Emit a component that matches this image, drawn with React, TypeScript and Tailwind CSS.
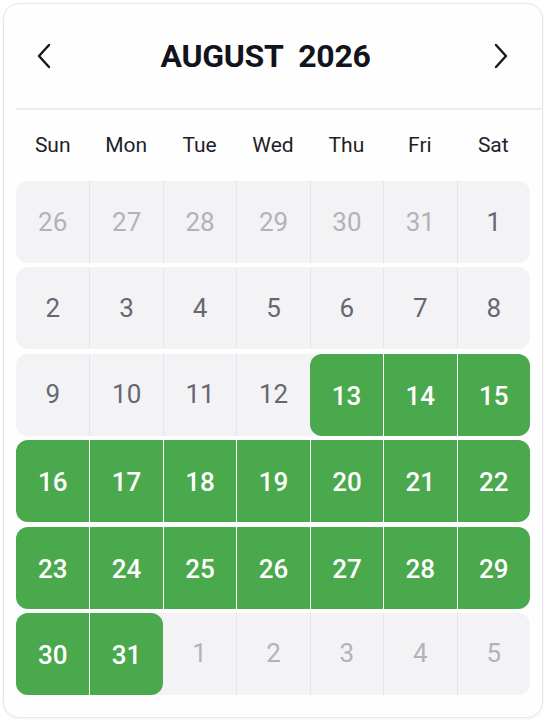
import { ReactNode } from 'react';

type Day = { n: number; muted?: boolean; on?: boolean };

const WEEKDAYS = ['Sun', 'Mon', 'Tue', 'Wed', 'Thu', 'Fri', 'Sat'];

// August 2026 starts on a Saturday; selected range 13 - 31
function buildWeeks(): Day[][] {
    const days: Day[] = [];
    for (let d = 26; d <= 31; d++) days.push({ n: d, muted: true });
    for (let d = 1; d <= 31; d++) days.push({ n: d, on: d >= 13 });
    for (let d = 1; d <= 5; d++) days.push({ n: d, muted: true });
    const weeks: Day[][] = [];
    for (let i = 0; i < days.length; i += 7) weeks.push(days.slice(i, i + 7));
    return weeks;
}

function Chevron({ dir }: { dir: 'left' | 'right' }) {
    return (
        <svg width="16" height="26" viewBox="0 0 16 26" fill="none" stroke="#15171f" strokeWidth={2.4} strokeLinecap="round" strokeLinejoin="round">
            {dir === 'left' ? <path d="M13 2 L3 13 L13 24" /> : <path d="M3 2 L13 13 L3 24" />}
        </svg>
    );
}

function Cell({ day, prev, next, children }: { day: Day; prev?: Day; next?: Day; children: ReactNode }) {
    const startOfRun = day.on && prev && !prev.on;
    const endOfRun = day.on && next && !next.on;
    let cls = 'flex items-center justify-center text-[26px] ';
    if (day.on) {
        cls += 'bg-[#4aa94d] text-white font-medium pt-[3px] ';
        if (prev?.on) cls += 'border-l border-white ';
        if (startOfRun) cls += 'rounded-l-[12px] ';
        if (endOfRun) cls += 'rounded-r-[12px] ';
    } else {
        cls += day.muted ? 'font-normal text-[#b2b2ba] ' : 'font-normal text-[#666771] ';
        if (prev && !prev.on) cls += 'border-l border-[#e4e4ea] ';
    }
    return <div className={cls}>{children}</div>;
}

export default function App() {
    const weeks = buildWeeks();

    return (
        <div className="w-[546px] h-[720px] bg-white p-[3px] font-['Roboto',sans-serif]">
            <div className="h-[715px] rounded-[16px] border border-[#e6e6ec] bg-[#fefefe] shadow-[0_1px_3px_rgba(0,0,0,0.06)] flex flex-col">
                {/* Header */}
                <div className="h-[104px] flex items-center justify-between pl-[32px] pr-[33px]">
                    <Chevron dir="left" />
                    <h1 className="text-[32px] font-bold text-[#12141d] tracking-[-0.3px] [word-spacing:8px] mr-[14px]">AUGUST 2026</h1>
                    <Chevron dir="right" />
                </div>
                <div className="ml-[12px] h-[2px] bg-[#ebebf0]" />

                {/* Weekdays */}
                <div className="mx-[12px] h-[71px] grid grid-cols-7 items-center">
                    {WEEKDAYS.map(w => (
                        <div key={w} className="text-center text-[21px] text-[#1d1f29]">{w}</div>
                    ))}
                </div>

                {/* Days */}
                <div className="mx-[12px] flex flex-col gap-[4.4px]">
                    {weeks.map((week, wi) => (
                        <div key={wi} className="h-[82px] grid grid-cols-7 rounded-[12px] overflow-hidden bg-[#f3f3f6]">
                            {week.map((day, di) => (
                                <Cell key={di} day={day} prev={week[di - 1]} next={week[di + 1]}>
                                    {day.n}
                                </Cell>
                            ))}
                        </div>
                    ))}
                </div>
            </div>
        </div>
    );
}
